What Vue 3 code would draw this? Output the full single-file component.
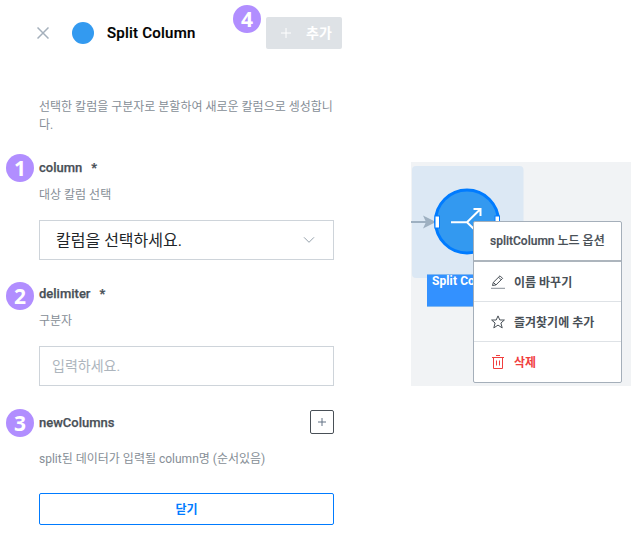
<script setup>
const fields = [
  { id: 1, name: 'column', help: '대상 칼럼 선택', type: 'select', text: '칼럼을 선택하세요.' },
  { id: 2, name: 'delimiter', help: '구분자', type: 'input', text: '입력하세요.' }
]
</script>

<template>
  <div class="page">
    <section class="panel">
      <header class="header">
        <svg class="close" viewBox="0 0 12 12"><path d="M.5.5 11.5 11.5M11.5.5.5 11.5" /></svg>
        <span class="dot"></span>
        <h1>Split Column</h1>
        <button class="add">
          <svg viewBox="0 0 10 10"><path d="M5 0V10M0 5H10" /></svg>
          <span>추가</span>
          <i class="badge badge-add">4</i>
        </button>
      </header>

      <p class="description">선택한 칼럼을 구분자로 분할하여 새로운 칼럼으로 셍성합니다.</p>

      <div v-for="f in fields" :key="f.id" class="field">
        <i class="badge" :class="'badge-' + f.id">{{ f.id }}</i>
        <div class="label">{{ f.name }}<span class="star">*</span></div>
        <div class="help">{{ f.help }}</div>
        <div class="control" :class="f.type">
          <span>{{ f.text }}</span>
          <svg v-if="f.type === 'select'" viewBox="0 0 12 8"><path d="M1 1.3 6 6.3 11 1.3" /></svg>
        </div>
      </div>

      <div class="columns">
        <i class="badge badge-3">3</i>
        <div class="label">newColumns</div>
        <button class="plus"><svg viewBox="0 0 8 8"><path d="M4 0V8M0 4H8" /></svg></button>
      </div>
      <div class="help note">split된 데이터가 입력될 column명 (순서있음)</div>
      <button class="done">닫기</button>
    </section>

    <section class="canvas">
      <svg class="graph" viewBox="0 0 220 224">
        <rect x="1" y="4" width="111.500" height="112" rx="4" fill="#dce8f4" />
        <path d="M0 60H18" stroke="#9eb0c1" stroke-width="2" />
        <path d="M12 53.500 25 60 12 66.500 15 60Z" fill="#9eb0c1" />
        <circle cx="56" cy="59.500" r="31.500" fill="#3399f0" stroke="#007bff" stroke-width="3" />
        <g fill="none" stroke="#fff" stroke-width="2">
          <path d="M40 60.300H56L69 47.500M62.500 47H69.500V54M56 60.300 69 73" />
        </g>
        <rect x="24" y="54" width="4.500" height="12" fill="#fff" stroke="#007bff" />
        <rect x="84" y="54" width="4.500" height="12" fill="#fff" stroke="#007bff" />
      </svg>
      <div class="node-label">Split Column</div>
      <div class="menu">
        <div class="menu-title">splitColumn 노드 옵션</div>
        <div class="item">
          <svg viewBox="0 0 14 14"><path d="M1.500 10.500 2.300 7.400 9 .8 11.600 3.400 5 9.900ZM7.600 2.200 10.200 4.800M2.300 7.400 5 9.900" /><path class="base" d="M0 13.300H14" /></svg>
          <span>이름 바꾸기</span>
        </div>
        <div class="item">
          <svg viewBox="0 0 14 14"><path d="M7 .9 8.800 5H13.400L9.900 8 11.200 12.900 7 10.100 2.800 12.900 4.100 8 .6 5H5.200Z" /></svg>
          <span>즐겨찾기에 추가</span>
        </div>
        <div class="item danger">
          <svg viewBox="0 0 14 14"><path d="M1 2.500H13M5 .5H9M2.500 2.500V13.500H11.500V2.500M5.500 5.500V10.500M8.500 5.500V10.500" /></svg>
          <span>삭제</span>
        </div>
      </div>
    </section>
  </div>
</template>

<style>
body { background: #fff; }
</style>

<style scoped>
* { box-sizing: border-box; }
.page {
  display: flex;
  width: 631px;
  height: 538px;
  overflow: hidden;
  font-family: Roboto, "Noto Sans CJK KR", sans-serif;
  color: #495057;
}
svg { display: block; fill: none; stroke: currentColor; flex: none; }
button { font: inherit; background: none; padding: 0; margin: 0; }
.panel { width: 342px; padding: 17px 8px 0 39px; flex: none; }
.header { display: flex; align-items: center; height: 32px; margin: 0 -8px 0 -2px; }
.close { width: 12px; height: 12px; color: #a5b0bc; stroke-width: 1.5; }
.dot { width: 22px; height: 22px; border-radius: 50%; background: #339af0; margin-left: 23px; }
h1 { margin: 0 0 0 13px; font-size: 15px; font-weight: 500; line-height: 20px; letter-spacing: .23px; color: #000; white-space: nowrap; -webkit-text-stroke: .2px #000; }
.add {
  position: relative;
  display: flex;
  align-items: center;
  gap: 15px;
  width: 76px;
  height: 32px;
  margin-left: auto;
  padding: 0 0 1px 15px;
  border: 0;
  border-radius: 2px;
  background: #dee2e6;
  color: #fff;
  font-size: 14px;
  font-weight: 700;
}
.add span { padding-bottom: 1px; }
.add svg { width: 10px; height: 10px; }
.badge {
  position: absolute;
  left: -33px;
  top: -6px;
  width: 28px;
  height: 28px;
  border-radius: 50%;
  background: #b18eff;
  color: #fff;
  font: 700 21px/28px "Noto Sans", sans-serif;
  text-align: center;
}
.badge-2 { top: -4px; }
.badge-3 { top: -1px; }
.badge-add { top: -12px; }
.description { margin: 49px 0 26px; font-size: 12px; line-height: 18px; color: #868e96; word-break: break-all; }
.field { position: relative; height: 126px; }
.label { font-size: 13px; line-height: 16px; font-weight: 500; -webkit-text-stroke: .25px #495057; }
.star { margin-left: 9px; }
.help { margin-top: 10px; font-size: 12px; line-height: 18px; color: #868e96; white-space: nowrap; }
.control {
  display: flex;
  align-items: center;
  justify-content: space-between;
  height: 40px;
  margin-top: 16px;
  border: 1px solid #ced4da;
}
.select { padding: 0 18px 0 16px; font-size: 16px; color: #212529; }
.select span { padding-bottom: 3px; }
.select svg { width: 12px; height: 8px; color: #94a0ab; }
.input { padding: 0 12px 2px; font-size: 14px; color: #adb5bd; }
.columns { position: relative; display: flex; align-items: center; justify-content: space-between; height: 24px; margin-top: -2px; }
.columns .label { padding-top: 2px; }
.plus { display: flex; align-items: center; justify-content: center; width: 24px; height: 24px; border: 1px solid #495057; border-radius: 2px; color: #627385; }
.plus svg { width: 8px; height: 8px; }
.note { margin-top: 16px; }
.done { display: block; width: 295px; height: 32px; margin-top: 25px; padding-bottom: 2px; border: 1px solid #007bff; border-radius: 2px; color: #007bff; font-size: 12px; font-weight: 700; }
.canvas { position: relative; width: 220px; height: 224px; margin: 162px 0 0 69px; background: #f1f3f5; overflow: hidden; flex: none; }
.graph { width: 220px; height: 224px; stroke: none; }
.node-label {
  position: absolute;
  left: 16px;
  top: 112px;
  width: 82px;
  height: 33px;
  padding-left: 5px;
  background: #3391ff;
  border-top: 1px solid #82b8f0;
  border-bottom: 1px solid #82b8f0;
  color: #fff;
  font-size: 12px;
  line-height: 13px;
  font-weight: 700;
  letter-spacing: .1px;
  white-space: nowrap;
}
.menu { position: absolute; left: 62px; top: 59px; width: 149px; height: 162px; background: #fff; border: 1px solid #a5afba; border-radius: 2px; font-size: 12px; font-weight: 700; }
.menu-title { height: 40px; line-height: 38px; padding-left: 16px; border-bottom: 2px solid #adb5bd; font-weight: 500; white-space: nowrap; -webkit-text-stroke: .2px #495057; }
.item { display: flex; align-items: center; gap: 9px; height: 40px; padding-left: 17px; border-bottom: 1px solid #dee2e6; }
.item:last-child { border-bottom: 0; padding-bottom: 1px; }
.item:last-child span { padding-bottom: 1px; }
.item svg { width: 14px; height: 14px; }
.base { stroke: #868e96; }
.danger { color: #f03e3e; }
</style>
